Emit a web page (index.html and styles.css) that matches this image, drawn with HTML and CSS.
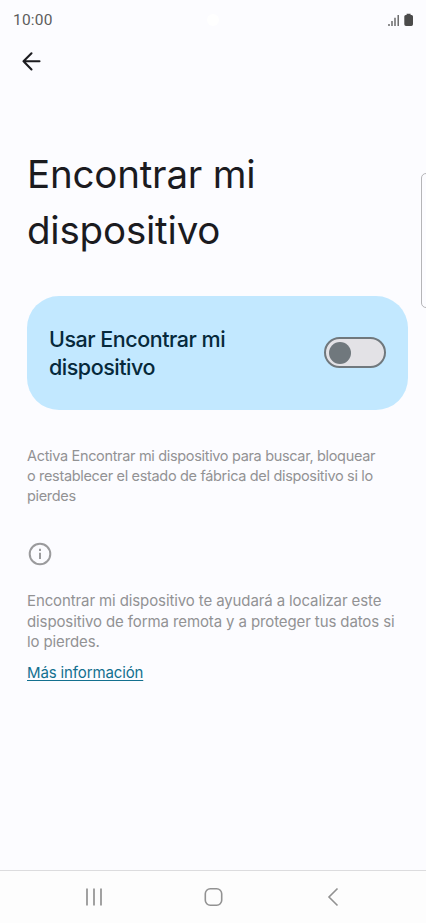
FILE: index.html
```html
<!DOCTYPE html>
<html lang="es">
  <head>
    <title>Encontrar mi dispositivo</title>
    <meta charset="utf-8" />
    <meta name="viewport" content="width=device-width, initial-scale=1">
    <link rel="stylesheet" href="styles.css">
  </head>
  <body>
    <div class="status">
      <span class="time">10:00</span>
      <span class="camera"></span>
      <svg class="status-icons" width="26" height="14" viewBox="0 0 26 14">
        <path d="M2 11v2M5 8v5M8 4.700v8.300M11.200 2v11" stroke="#555" stroke-width="1.3" fill="none"/>
        <path d="M19.600 .8h4v1.200h1q1.400 0 1.400 1.500v7.800q0 1.700-1.700 1.700h-5.300q-1.700 0-1.700-1.700v-7.800q0-1.500 1.400-1.500h.9z" fill="#4b4b4b"/>
      </svg>
    </div>

    <div class="toolbar">
      <svg width="20" height="20" viewBox="0 0 20 20">
        <path d="M18.500 10.200H2.500M10.500 2.300L2.500 10.200l8 8.300" fill="none" stroke="#1c1c20" stroke-width="2.100" stroke-linecap="round" stroke-linejoin="round"/>
      </svg>
    </div>

    <div class="content">
      <h1>Encontrar mi<br>dispositivo</h1>

      <div class="card">
        <h2>Usar Encontrar mi<br>dispositivo</h2>
        <div class="switch"><div class="thumb"></div></div>
      </div>

      <p class="summary">Activa Encontrar mi dispositivo para buscar, bloquear<br>o restablecer el estado de fábrica del dispositivo si lo<br>pierdes</p>

      <svg class="info" width="24" height="24" viewBox="0 0 24 24">
        <circle cx="12" cy="12" r="10.300" fill="none" stroke="#9b9b9d" stroke-width="2"/>
        <path d="M12 10.800v6.200M12 6.800v2.200" stroke="#9b9b9d" stroke-width="2"/>
      </svg>

      <p class="footer-text">Encontrar mi dispositivo te ayudará a localizar este<br>dispositivo de forma remota y a proteger tus datos si<br>lo pierdes.</p>
      <a class="more" href="#">Más información</a>
    </div>

    <div class="edge-panel"></div>

    <div class="navbar">
      <svg width="20" height="20" viewBox="0 0 20 20">
        <path d="M3 1.500v17M10 1.500v17M17 1.500v17" stroke="#929292" stroke-width="1.700"/>
      </svg>
      <svg width="20" height="20" viewBox="0 0 20 20">
        <rect x="1.300" y="1.800" width="16.400" height="16.400" rx="5" fill="none" stroke="#929292" stroke-width="1.600"/>
      </svg>
      <svg width="20" height="20" viewBox="0 0 20 20">
        <path d="M14.500 1.500L6 10l8.500 8.500" fill="none" stroke="#929292" stroke-width="1.600"/>
      </svg>
    </div>
  </body>
</html>
```
FILE: styles.css
```css
*{
    box-sizing: border-box;
}

body{
    margin: 0;
    height: 923px;
    display: flex;
    flex-direction: column;
    background-color: #fcfcff;
    font-family: Inter, "Open Sans", sans-serif;
    overflow: hidden;
    position: relative;
}

h1, h2, p{
    margin: 0;
    font-weight: 400;
    white-space: nowrap;
}

.status{
    display: flex;
    align-items: center;
    justify-content: space-between;
    height: 40px;
    padding: 0 13px;
}

.time{
    font-family: Roboto, sans-serif;
    font-size: 15.5px;
    letter-spacing: 0.2px;
    color: #5c5c5c;
    width: 40px;
}

.camera{
    width: 12px;
    height: 12px;
    border-radius: 50%;
    background-color: #fff;
    margin-right: 14px;
}

.toolbar{
    height: 42px;
    padding: 11px 21px;
}

.toolbar svg{
    display: block;
}

.content{
    flex: 1;
    display: flex;
    flex-direction: column;
    align-items: flex-start;
    padding: 64px 18px 0 27px;
}

h1{
    font-size: 38.5px;
    line-height: 56px;
    letter-spacing: -0.2px;
    color: #1b1b1f;
}

.card{
    align-self: stretch;
    display: flex;
    align-items: center;
    justify-content: space-between;
    height: 114px;
    margin-top: 38px;
    padding: 0 22px 1px;
    border-radius: 32px;
    background-color: #c2e8ff;
}

h2{
    font-size: 21.5px;
    line-height: 28px;
    font-weight: 500;
    letter-spacing: -0.48px;
    color: #06293b;
}

.switch{
    width: 62px;
    height: 31px;
    padding: 2.5px;
    border: 2px solid #70787d;
    border-radius: 16px;
    background-color: #e3e2e6;
}

.thumb{
    width: 22px;
    height: 22px;
    border-radius: 50%;
    background-color: #70787d;
}

.summary{
    margin-top: 36px;
    font-size: 14.5px;
    line-height: 19.8px;
    letter-spacing: -0.33px;
    color: #929294;
}

.info{
    margin: 37px 0 0 1px;
}

.footer-text{
    margin-top: 25px;
    font-size: 15px;
    line-height: 20.5px;
    letter-spacing: -0.11px;
    color: #929294;
}

.more{
    margin-top: 10px;
    font-size: 15px;
    line-height: 20px;
    letter-spacing: -0.13px;
    color: #13708f;
    text-underline-offset: 2px;
}

/* handle over the right border of the screen */
.edge-panel{
    position: absolute;
    top: 173px;
    right: -6px;
    width: 11px;
    height: 135px;
    border: 1px solid #b5b5b8;
    border-radius: 5px;
}

.navbar{
    display: flex;
    justify-content: space-between;
    align-items: center;
    height: 53px;
    padding: 0 83px 0 84px;
    border-top: 1px solid #dcdcde;
    background-color: #fdfdfd;
}
```
